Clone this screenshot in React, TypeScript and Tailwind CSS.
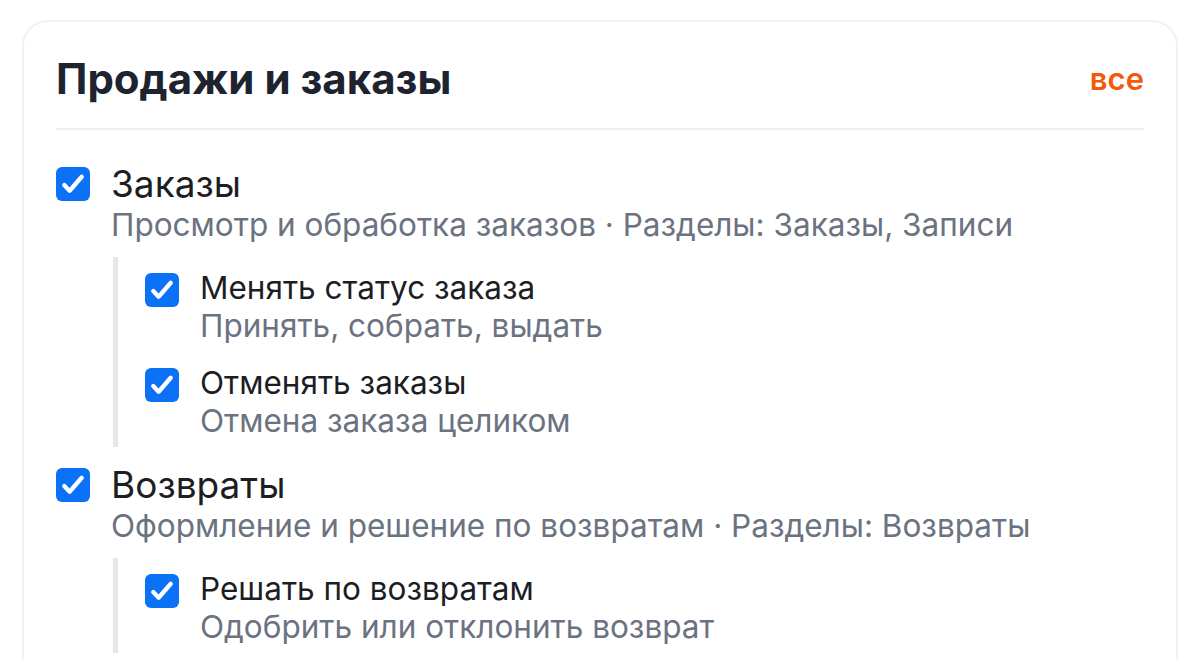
import React from 'react'

type Perm = {
  title: string
  desc: string
  children?: { title: string; desc: string }[]
}

const perms: Perm[] = [
  {
    title: 'Заказы',
    desc: 'Просмотр и обработка заказов · Разделы: Заказы, Записи',
    children: [
      { title: 'Менять статус заказа', desc: 'Принять, собрать, выдать' },
      { title: 'Отменять заказы', desc: 'Отмена заказа целиком' },
    ],
  },
  {
    title: 'Возвраты',
    desc: 'Оформление и решение по возвратам · Разделы: Возвраты',
    children: [{ title: 'Решать по возвратам', desc: 'Одобрить или отклонить возврат' }],
  },
]

function Check() {
  return (
    <span className="flex h-[34px] w-[34px] shrink-0 items-center justify-center rounded-[6px] bg-[#0b72f7]">
      <svg width="30" height="30" viewBox="0 0 24 24" fill="none">
        <path d="M5 12.8l4.3 4.6L19 6.2" stroke="white" strokeWidth="3.4" strokeLinecap="round" strokeLinejoin="round" />
      </svg>
    </span>
  )
}

export default function App() {
  return (
    <div className="min-h-screen bg-white px-[22px] pt-[20px] font-['Inter',sans-serif]">
      <div className="h-[700px] rounded-[26px] border-2 border-[#f1f1f1] px-[32px] pt-[32px]">
        <div className="flex items-center justify-between border-b-2 border-[#eeeeee] pb-[24px]">
          <h2 className="text-[42px] font-bold leading-[50px] text-[#1e2330]">Продажи и заказы</h2>
          <button className="text-[31px] font-semibold leading-[40px] text-[#f25a0a]">все</button>
        </div>

        <div className="pt-[34px]">
          {perms.map((p) => (
            <div key={p.title} className="mb-[18px]">
              <div className="flex gap-[21px]">
                <div className="pt-[3px]">
                  <Check />
                </div>
                <div>
                  <div className="text-[37px] leading-[40px] text-[#1c1e24]">{p.title}</div>
                  <div className="text-[31.5px] leading-[41px] text-[#6b7280]">{p.desc}</div>
                </div>
              </div>
              {p.children && (
                <div className="ml-[57px] mt-[12px] flex flex-col gap-[19px] border-l-[5px] border-[#e6e7ea] pb-[7px] pl-[27px] pt-[12px]">
                  {p.children.map((c) => (
                    <div key={c.title} className="flex gap-[21px]">
                      <div className="pt-[4px]">
                        <Check />
                      </div>
                      <div>
                        <div className="text-[31.5px] leading-[38px] text-[#1c1e24]">{c.title}</div>
                        <div className="text-[31.5px] leading-[38px] text-[#6b7280]">{c.desc}</div>
                      </div>
                    </div>
                  ))}
                </div>
              )}
            </div>
          ))}
        </div>
      </div>
    </div>
  )
}
